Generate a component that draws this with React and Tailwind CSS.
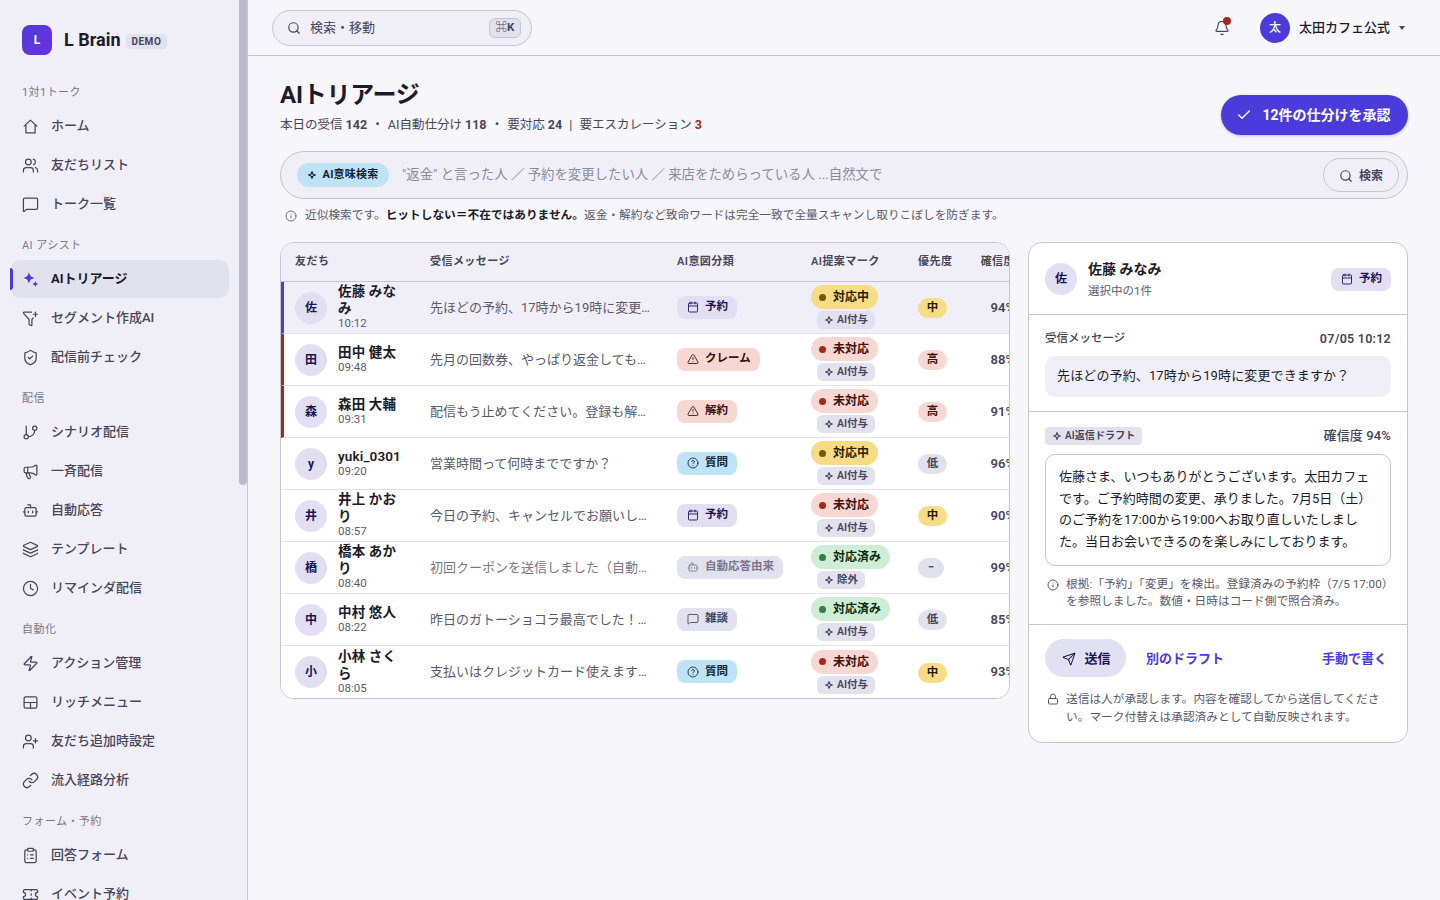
import React from "react";
import {
  Users, MessageSquare, FunnelPlus, ShieldCheck, GitBranch, Megaphone, Bot, Layers, Clock,
  Zap, UserPlus, Link, ClipboardList, Ticket, Search, Bell, Check, Calendar, TriangleAlert,
  CircleHelp, Info, Send, Lock,
} from "lucide-react";

const Star = ({ className = "w-2 h-2" }) => (
  <svg viewBox="0 0 24 24" className={`${className} shrink-0`} fill="none" stroke="currentColor" strokeWidth="3.5" strokeLinejoin="round">
    <path d="M12 2l2.8 7.2L22 12l-7.2 2.8L12 22l-2.8-7.2L2 12l7.2-2.8z" />
  </svg>
);

const Sparkle = () => (
  <svg viewBox="0 0 16 16" className="w-[17px] h-[17px] shrink-0 text-[#4b3bdb]" fill="currentColor">
    <path d="M6.5 1.5l1.6 3.4 3.4 1.6-3.4 1.6-1.6 3.4-1.6-3.4L1.5 6.5l3.4-1.6z" />
    <path d="M12.5 9.5l.9 1.8 1.8.9-1.8.9-.9 1.8-.9-1.8-1.8-.9 1.8-.9z" />
  </svg>
);

const HomeIcon = ({ className }) => (
  <svg viewBox="0 0 24 24" className={className} fill="none" stroke="currentColor" strokeWidth="1.75" strokeLinecap="round" strokeLinejoin="round">
    <path d="M3 11.5L12 3l9 8.5M5.5 9.5V21h13V9.5" />
  </svg>
);

const RichMenu = ({ className }) => (
  <svg viewBox="0 0 24 24" className={className} fill="none" stroke="currentColor" strokeWidth="1.75" strokeLinecap="round" strokeLinejoin="round">
    <rect x="3" y="4" width="18" height="16" rx="2" />
    <path d="M3 12h18M12 12v8" />
  </svg>
);

const nav = [
  { label: "1対1トーク", items: [["ホーム", HomeIcon], ["友だちリスト", Users], ["トーク一覧", MessageSquare]] },
  { label: "AI アシスト", items: [["AIトリアージ", Sparkle, true], ["セグメント作成AI", FunnelPlus], ["配信前チェック", ShieldCheck]] },
  { label: "配信", items: [["シナリオ配信", GitBranch], ["一斉配信", Megaphone], ["自動応答", Bot], ["テンプレート", Layers], ["リマインダ配信", Clock]] },
  { label: "自動化", items: [["アクション管理", Zap], ["リッチメニュー", RichMenu], ["友だち追加時設定", UserPlus], ["流入経路分析", Link]] },
  { label: "フォーム・予約", items: [["回答フォーム", ClipboardList], ["イベント予約", Ticket]] },
];

const intents = {
  予約: ["bg-[#e2dff3] text-[#1a1458]", Calendar],
  クレーム: ["bg-[#f6d7d2] text-[#3f0f0a]", TriangleAlert],
  解約: ["bg-[#f6d7d2] text-[#3f0f0a]", TriangleAlert],
  質問: ["bg-[#bfe3f5] text-[#0f2a3a]", CircleHelp],
  自動応答由来: ["bg-[#e2e1ee] text-[#78778a]", Bot],
  雑談: ["bg-[#e2e1ee] text-[#46455a]", MessageSquare],
};

const statuses = {
  対応中: ["bg-[#f6dc85] text-[#2a1f00]", "bg-[#6f5a10]"],
  未対応: ["bg-[#f6d7d2] text-[#3f0f0a]", "bg-[#a52a1c]"],
  対応済み: ["bg-[#cdeed4] text-[#0d2a12]", "bg-[#3a7d44]"],
};

const priorities = {
  中: "bg-[#f6dc85] text-[#2a1f00] w-[29px]",
  高: "bg-[#f6d7d2] text-[#3f0f0a] w-[29px]",
  低: "bg-[#e2e1ee] text-[#46455a] w-[29px]",
  "−": "bg-[#e2e1ee] text-[#46455a] w-[26px]",
};

const rows = [
  ["佐", "佐藤 みなみ", "10:12", "先ほどの予約、17時から19時に変更できますか？", "予約", "対応中", "AI付与", "中", "94%", "sel"],
  ["田", "田中 健太", "09:48", "先月の回数券、やっぱり返金してもらえますか", "クレーム", "未対応", "AI付与", "高", "88%", "red"],
  ["森", "森田 大輔", "09:31", "配信もう止めてください。登録も解除してください", "解約", "未対応", "AI付与", "高", "91%", "red"],
  ["y", "yuki_0301", "09:20", "営業時間って何時までですか？", "質問", "対応中", "AI付与", "低", "96%", ""],
  ["井", "井上 かおり", "08:57", "今日の予約、キャンセルでお願いします。すみません", "予約", "未対応", "AI付与", "中", "90%", ""],
  ["橋", "橋本 あかり", "08:40", "初回クーポンを送信しました（自動応答）です", "自動応答由来", "対応済み", "除外", "−", "99%", "auto"],
  ["中", "中村 悠人", "08:22", "昨日のガトーショコラ最高でした！ありがとう", "雑談", "対応済み", "AI付与", "低", "85%", ""],
  ["小", "小林 さくら", "08:05", "支払いはクレジットカード使えますか？教えてください", "質問", "未対応", "AI付与", "中", "93%", ""],
];

function IntentChip({ name }) {
  const [cls, Icon] = intents[name];
  return (
    <span className={`inline-flex items-center h-[23px] whitespace-nowrap rounded-lg pl-2.5 pr-[9px] gap-1.5 text-[11.5px] font-semibold ${cls}`}>
      <Icon className="w-3 h-3 shrink-0" strokeWidth={1.75} />
      {name}
    </span>
  );
}

function Sidebar() {
  return (
    <aside className="relative w-[248px] shrink-0 h-full overflow-hidden bg-[#f0eff8] border-r border-[#c6c4d4]">
      <div className="pl-[10px] pr-[18px]">
        <div className="flex items-center h-[85px] pl-3 pb-[5px]">
          <div className="w-[30px] h-[30px] rounded-lg bg-gradient-to-br from-[#4b3bdb] to-[#6d2ee0] flex items-center justify-center text-white text-xs font-bold">L</div>
          <span className="ml-3 text-lg font-bold text-[#1b1b2b] leading-none">L Brain</span>
          <span className="ml-[5px] mt-[3px] h-[15px] px-1.5 rounded bg-[#e2e1ee] text-[10px] font-bold tracking-[0.05em] text-[#46455a] flex items-center">DEMO</span>
        </div>
        {nav.map((s, i) => (
          <div key={s.label} className={i ? "mt-[15px]" : ""}>
            <div className="h-4 mb-1.5 pl-3 text-[11px] leading-4 tracking-[0.04em] text-[#78768a]">{s.label}</div>
            <div className="flex flex-col gap-px">
              {s.items.map(([label, Icon, active]) => (
                <div key={label} className={`relative h-[38px] shrink-0 rounded-[10px] flex items-center gap-3 pl-3 text-[13px] ${active ? "bg-[#e2e2ee] font-bold text-[#1b1b2b]" : "font-medium text-[#46455a]"}`}>
                  {active && <span className="absolute left-0 top-2 bottom-2 w-[3px] rounded-r bg-[#4b3bdb]" />}
                  {active ? <Icon /> : <Icon className="w-[17px] h-[17px] shrink-0" strokeWidth={1.75} />}
                  {label}
                </div>
              ))}
            </div>
          </div>
        ))}
      </div>
      <div className="absolute right-0 top-0 w-2 h-[485px] rounded-b bg-[#bcbaca]" />
    </aside>
  );
}

function TopBar() {
  return (
    <header className="h-[56px] shrink-0 border-b border-[#c6c4d4] flex items-center justify-between pl-6 pr-[35px]">
      <div className="w-[260px] h-9 rounded-full border border-[#c6c4d4] bg-[#f0eff8] flex items-center pl-3.5 pr-2.5 text-[13px] text-[#46455a]">
        <Search className="w-3.5 h-3.5 shrink-0" strokeWidth={2} />
        <span className="ml-[9px]">検索・移動</span>
        <span className="ml-auto w-8 h-5 rounded-md border border-[#c6c4d4] bg-[#e2e1ee] flex items-center justify-center text-[11.5px] font-bold text-[#46455a]">
          <span className="font-normal">⌘</span>K
        </span>
      </div>
      <div className="flex items-center">
        <div className="relative mr-[30px] text-[#46455a]">
          <Bell className="w-4 h-4" strokeWidth={1.75} />
          <span className="absolute -top-[3px] left-[9px] w-2 h-2 rounded-full bg-[#a52a1c]" />
        </div>
        <div className="w-[30px] h-[30px] rounded-full bg-[#4b3bdb] text-white text-xs font-medium flex items-center justify-center">太</div>
        <span className="ml-[9px] text-[13px] font-medium text-[#1b1b2b]">太田カフェ公式</span>
        <span className="ml-[9px] w-0 h-0 border-x-[3.5px] border-x-transparent border-t-[4px] border-t-[#46455a]" />
      </div>
    </header>
  );
}

function Table() {
  const th = "px-3.5 whitespace-nowrap font-semibold text-[11px] tracking-[0.04em] text-[#46455a] border-b border-[#c6c4d4] text-left";
  return (
    <div className="flex-1 min-w-0 self-start rounded-[14px] border border-[#c6c4d4] bg-white overflow-hidden">
      <table className="table-fixed w-[748px] border-separate border-spacing-0">
        <colgroup>
          <col className="w-[135px]" /><col className="w-[247px]" /><col className="w-[134px]" />
          <col className="w-[107px]" /><col className="w-[62px]" /><col className="w-[63px]" />
        </colgroup>
        <thead>
          <tr className="h-[39px] bg-[#f0eff8]">
            <th className={th}>友だち</th>
            <th className={th}>受信メッセージ</th>
            <th className={th}>AI意図分類</th>
            <th className={th}>AI提案マーク</th>
            <th className={`${th} !pr-0`}>優先度</th>
            <th className={`${th} !text-right`}>確信度</th>
          </tr>
        </thead>
        <tbody>
          {rows.map((r, i) => {
            const [av, name, time, msg, intent, st, tag, pr, conf, kind] = r;
            const last = i === rows.length - 1;
            const td = `h-[52px] px-3.5 align-middle ${last ? "" : "border-b border-[#e2e1ea]"} ${kind === "sel" ? "bg-[#f0eff8]" : "bg-white"}`;
            const accent = kind === "sel" ? "border-l-[#4b3bdb]" : kind === "red" ? "border-l-[#a52a1c]" : "border-l-transparent";
            return (
              <tr key={av}>
                <td className={`${td} border-l-[3px] !pl-[11px] !pr-0 ${accent}`}>
                  <div className="flex items-center gap-[11px]">
                    <span className="w-8 h-8 shrink-0 rounded-full bg-[#e2dff3] text-[#1a1458] text-xs font-bold flex items-center justify-center">{av}</span>
                    <div className="w-[64px] -mt-[2px]">
                      <div className="text-[13.5px] leading-[17px] font-semibold tracking-[0.01em] text-[#1b1b2b] break-all">{name}</div>
                      <div className="text-[11.5px] leading-[13px] text-[#5c5b6e]">{time}</div>
                    </div>
                  </div>
                </td>
                <td className={`${td} !pr-3`}>
                  <div className={`truncate text-[13px] ${kind === "auto" ? "text-[#78778a]" : "text-[#5a596b]"}`}>{msg}</div>
                </td>
                <td className={td}><div className="flex items-center pb-px"><IntentChip name={intent} /></div></td>
                <td className={`${td} !py-0 !pr-0`}>
                  <div className="flex flex-col items-start gap-0.5 -mt-px">
                    <span className={`inline-flex items-center h-6 whitespace-nowrap rounded-full pl-2 pr-[9px] gap-[7px] text-xs font-bold ${statuses[st][0]}`}>
                      <span className={`w-[7px] h-[7px] rounded-full ${statuses[st][1]}`} />
                      {st}
                    </span>
                    <span className="ml-1.5 inline-flex items-center h-[18px] whitespace-nowrap rounded-md bg-[#e2e1ee] pl-2 pr-[7px] gap-1 text-[10.5px] font-semibold text-[#46455a]">
                      <Star />
                      {tag}
                    </span>
                  </div>
                </td>
                <td className={td}>
                  <div className="flex items-center pt-px">
                    <span className={`inline-flex items-center justify-center h-5 rounded-full text-[11.5px] font-bold ${priorities[pr]}`}>{pr}</span>
                  </div>
                </td>
                <td className={`${td} text-right text-[13px] font-semibold text-[#46455a]`}>{conf}</td>
              </tr>
            );
          })}
        </tbody>
      </table>
    </div>
  );
}

function Detail() {
  const divider = "border-b border-[#c6c4d4] px-4";
  return (
    <div className="w-[380px] shrink-0 self-start rounded-[14px] border border-[#c6c4d4] bg-white overflow-hidden">
      <div className={`${divider} h-[72px] flex items-center pt-px`}>
        <span className="w-8 h-8 shrink-0 rounded-full bg-[#e2dff3] text-[#1a1458] text-xs font-bold flex items-center justify-center">佐</span>
        <div className="ml-[11px] -mt-px">
          <div className="text-sm font-semibold text-[#1b1b2b] leading-5">佐藤 みなみ</div>
          <div className="mt-[4px] text-[11.5px] leading-4 text-[#5c5b6e]">選択中の1件</div>
        </div>
        <div className="ml-auto flex"><IntentChip name="予約" /></div>
      </div>
      <div className={`${divider} h-[97px] pt-[15px]`}>
        <div className="flex items-center justify-between h-4 mt-px text-[11.5px] font-medium text-[#46455a]">
          <span>受信メッセージ</span>
          <span className="text-[12.5px] font-semibold tracking-[0.02em]">07/05 10:12</span>
        </div>
        <div className="mt-[9px] h-[41px] rounded-[10px] bg-[#f0eff8] px-3 pb-[2px] flex items-center text-[13px] tracking-[0.01em] text-[#1b1b2b]">先ほどの予約、17時から19時に変更できますか？</div>
      </div>
      <div className={`${divider} h-[213px] pt-[15px]`}>
        <div className="flex items-center justify-between h-[18px]">
          <span className="inline-flex items-center h-[18px] rounded bg-[#e2e1ee] pl-2 pr-[7px] pb-px gap-1 text-[10px] font-semibold tracking-[0.01em] text-[#46455a]">
            <Star />
            AI返信ドラフト
          </span>
          <span className="text-[13px] font-medium tracking-[0.01em] text-[#46455a]">確信度 94%</span>
        </div>
        <div className="mt-[9px] h-[112px] rounded-[10px] border border-[#c6c4d4] px-[13px] py-[11px] text-[13px] leading-[21.67px] text-[#1b1b2b]">
          佐藤さま、いつもありがとうございます。太田カフェです。ご予約時間の変更、承りました。7月5日（土）のご予約を17:00から19:00へお取り直しいたしました。当日お会いできるのを楽しみにしております。
        </div>
        <div className="mt-[10px] pl-0.5 flex gap-[7px] text-[11.7px] leading-[17px] text-[#5a596b]">
          <Info className="w-3 h-3 shrink-0 mt-[3px] text-[#46455a]" strokeWidth={1.75} />
          <span>根拠:「予約」「変更」を検出。登録済みの予約枠（7/5 17:00）を参照しました。数値・日時はコード側で照合済み。</span>
        </div>
      </div>
      <div className="px-4 pt-[14px] pb-[16px]">
        <div className="flex items-center">
          <div className="w-[81px] h-[38px] rounded-full bg-[#e2e0f3] flex items-center justify-center gap-2 pl-0.5 pt-px text-[13px] font-bold text-[#1a1458]">
            <Send className="w-3.5 h-3.5" strokeWidth={1.75} />
            送信
          </div>
          <span className="ml-5 pt-0.5 text-[13px] font-bold text-[#4b3bdb]">別のドラフト</span>
          <span className="ml-auto mr-[4px] pt-0.5 text-[13px] font-bold text-[#4b3bdb]">手動で書く</span>
        </div>
        <div className="mt-[13px] pl-0.5 flex gap-[7px] text-[11.7px] leading-[18px] text-[#5a596b]">
          <Lock className="w-3 h-3 shrink-0 mt-[3px] text-[#46455a]" strokeWidth={1.75} />
          <span>送信は人が承認します。内容を確認してから送信してください。マーク付替えは承認済みとして自動反映されます。</span>
        </div>
      </div>
    </div>
  );
}

export default function App() {
  return (
    <div className="flex h-screen w-full overflow-hidden bg-[#f6f6fb] font-['Roboto','Noto_Sans_CJK_JP',sans-serif]">
      <Sidebar />
      <main className="flex-1 min-w-0 flex flex-col">
        <TopBar />
        <div className="px-8 pt-[24px]">
          <div className="flex items-start justify-between">
            <div>
              <h1 className="text-2xl font-bold leading-[30px] tracking-[-0.01em] text-[#1b1b2b]">AIトリアージ</h1>
              <p className="mt-[7px] text-[12.5px] leading-4 text-[#46455a]">
                本日の受信 <b className="font-bold">142</b> <span className="mx-px">・</span> AI自動仕分け <b className="font-bold">118</b> <span className="mx-px">・</span> 要対応 <b className="font-bold">24</b><span className="mx-1"> | </span>要エスカレーション <b className="font-bold text-[#a52a1c]">3</b>
              </p>
            </div>
            <button className="mt-[15px] h-10 w-[187px] rounded-full bg-[#4b3bdb] text-white text-sm font-bold flex items-center justify-center gap-[10px] pr-0.5 shadow-[0_1px_3px_rgba(30,20,120,0.25)]">
              <Check className="w-4 h-4" strokeWidth={2} />
              12件の仕分けを承認
            </button>
          </div>
          <div className="mt-4 h-12 rounded-full border border-[#c6c4d4] bg-[#f0eff8] flex items-center pl-4 pr-2">
            <span className="h-6 w-[92px] rounded-full bg-[#bfe3f5] text-[#0f1e33] text-[11px] tracking-[0.02em] font-bold flex items-center justify-center gap-[7px]">
              <Star />
              AI意味検索
            </span>
            <span className="ml-[13px] pt-px text-[13.4px] text-[#8b8a9b]">"返金" と言った人 ／ 予約を変更したい人 ／ 来店をためらっている人 ...自然文で</span>
            <span className="ml-auto w-[76px] h-[34px] rounded-full border border-[#c6c4d4] flex items-center justify-center gap-[6px] pt-0.5 text-xs font-semibold text-[#46455a]">
              <Search className="w-3.5 h-3.5" strokeWidth={2} />
              検索
            </span>
          </div>
          <div className="mt-[9px] h-4 pl-[5px] flex items-center gap-2 text-[11.7px] text-[#5a596b]">
            <Info className="w-3 h-3 shrink-0" strokeWidth={1.75} />
            <span>近似検索です。<b className="font-bold text-[#1b1b2b]">ヒットしない＝不在ではありません。</b>返金・解約など致命ワードは完全一致で全量スキャンし取りこぼしを防ぎます。</span>
          </div>
          <div className="mt-[18px] flex items-start gap-[18px]">
            <Table />
            <Detail />
          </div>
        </div>
      </main>
    </div>
  );
}
